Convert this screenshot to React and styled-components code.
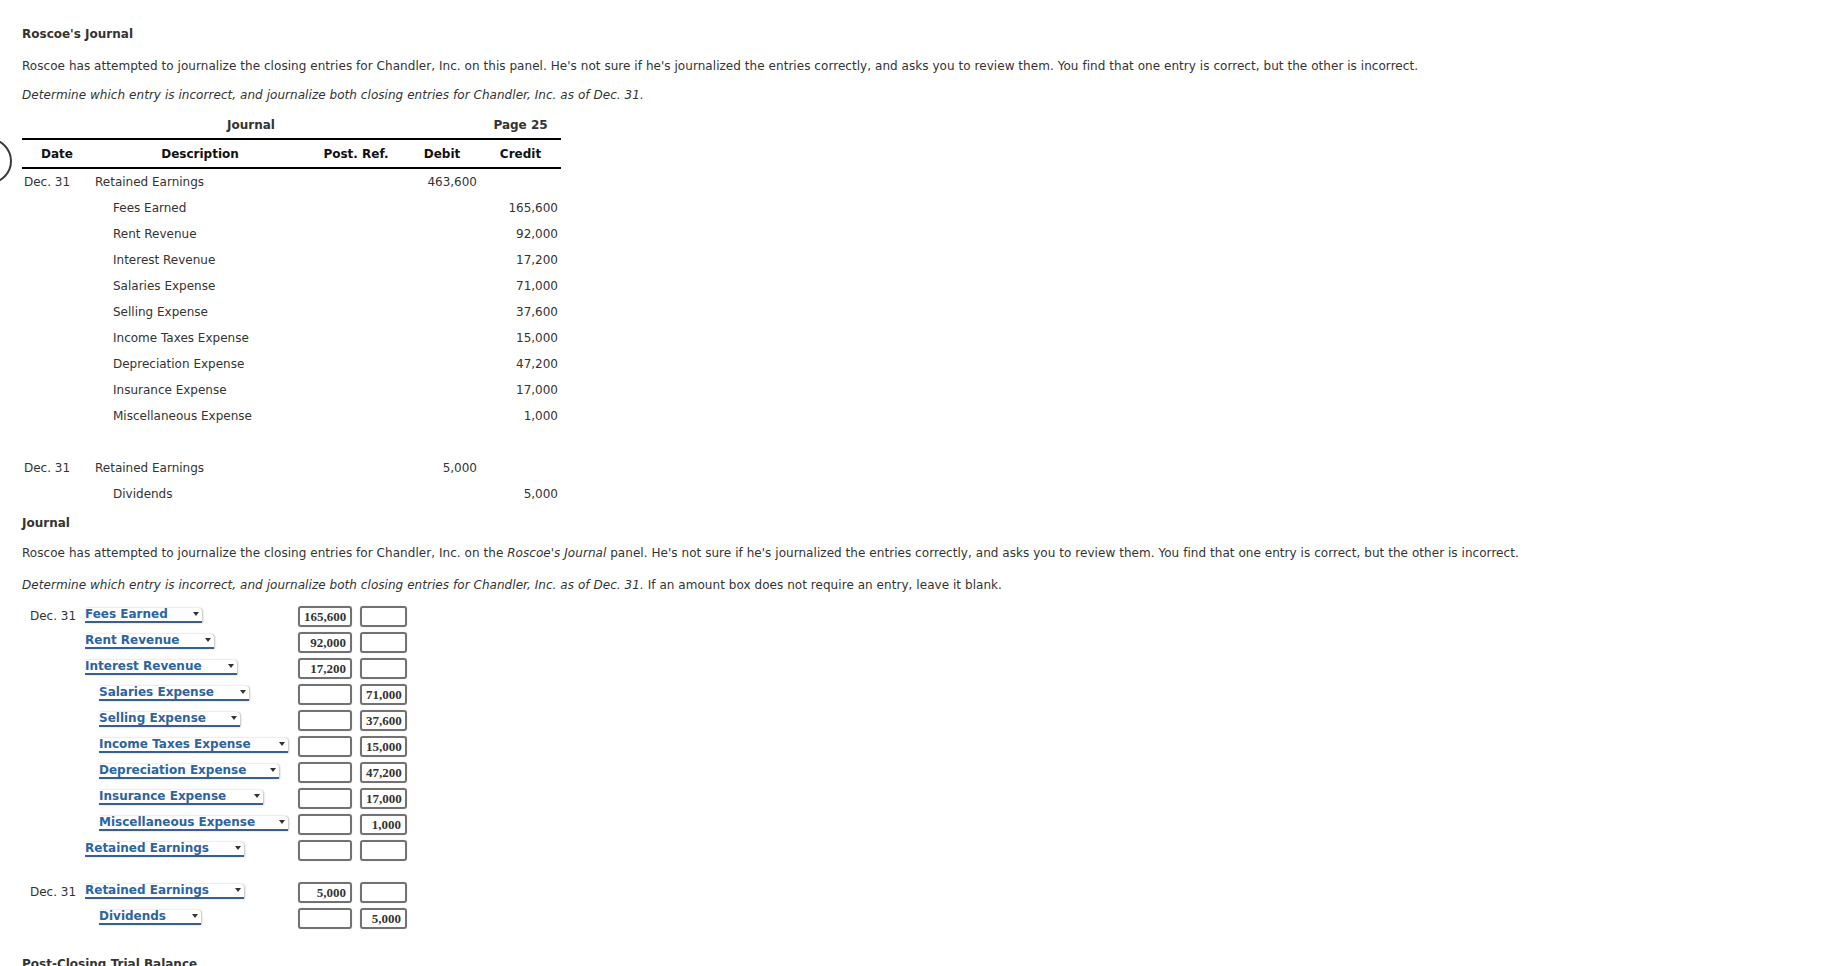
import React from 'react'
import styled, { createGlobalStyle } from 'styled-components'

const GlobalStyle = createGlobalStyle`
  body {
    margin: 0;
    background: #fff;
    font-family: "DejaVu Sans", Verdana, sans-serif;
    font-size: 12px;
    color: #333;
  }
`

const roscoeRows = [
  { date: 'Dec. 31', desc: 'Retained Earnings', debit: '463,600' },
  { desc: 'Fees Earned', indent: true, credit: '165,600' },
  { desc: 'Rent Revenue', indent: true, credit: '92,000' },
  { desc: 'Interest Revenue', indent: true, credit: '17,200' },
  { desc: 'Salaries Expense', indent: true, credit: '71,000' },
  { desc: 'Selling Expense', indent: true, credit: '37,600' },
  { desc: 'Income Taxes Expense', indent: true, credit: '15,000' },
  { desc: 'Depreciation Expense', indent: true, credit: '47,200' },
  { desc: 'Insurance Expense', indent: true, credit: '17,000' },
  { desc: 'Miscellaneous Expense', indent: true, credit: '1,000' },
  { blank: true },
  { date: 'Dec. 31', desc: 'Retained Earnings', debit: '5,000' },
  { desc: 'Dividends', indent: true, credit: '5,000' },
]

const answerRows = [
  { date: 'Dec. 31', account: 'Fees Earned', w: 117, debit: '165,600' },
  { account: 'Rent Revenue', w: 129, debit: '92,000' },
  { account: 'Interest Revenue', w: 152, debit: '17,200' },
  { account: 'Salaries Expense', w: 150, indent: true, credit: '71,000' },
  { account: 'Selling Expense', w: 141, indent: true, credit: '37,600' },
  { account: 'Income Taxes Expense', w: 189, indent: true, credit: '15,000' },
  { account: 'Depreciation Expense', w: 180, indent: true, credit: '47,200' },
  { account: 'Insurance Expense', w: 164, indent: true, credit: '17,000' },
  { account: 'Miscellaneous Expense', w: 189, indent: true, credit: '1,000' },
  { account: 'Retained Earnings', w: 159 },
  { spacer: true },
  { date: 'Dec. 31', account: 'Retained Earnings', w: 159, debit: '5,000' },
  { account: 'Dividends', w: 102, indent: true, credit: '5,000' },
]

function Dropdown({ label, w }) {
  return (
    <Select w={w}>
      <SelectText>{label}</SelectText>
      <Arrow />
    </Select>
  )
}

export default function App() {
  return (
    <Page>
      <GlobalStyle />
      <SideTab />

      <Heading>Roscoe's Journal</Heading>
      <Para>
        Roscoe has attempted to journalize the closing entries for Chandler, Inc. on this panel. He's not sure if he's
        journalized the entries correctly, and asks you to review them. You find that one entry is correct, but the other
        is incorrect.
      </Para>
      <Instruction>
        <i>Determine which entry is incorrect, and journalize both closing entries for Chandler, Inc. as of Dec. 31.</i>
      </Instruction>

      <JournalTable>
        <Caption>Journal</Caption>
        <CaptionRight>Page 25</CaptionRight>
        <HeadRow>
          <HeadCell>Date</HeadCell>
          <HeadCell>Description</HeadCell>
          <HeadCell>Post. Ref.</HeadCell>
          <HeadCell>Debit</HeadCell>
          <HeadCell>Credit</HeadCell>
        </HeadRow>
        {roscoeRows.map((r, i) => (
          <Row key={i}>
            <DateCell>{r.date}</DateCell>
            <DescCell indent={r.indent}>{r.desc}</DescCell>
            <Cell />
            <AmountCell>{r.debit}</AmountCell>
            <AmountCell>{r.credit}</AmountCell>
          </Row>
        ))}
      </JournalTable>

      <SubHeading>Journal</SubHeading>
      <Para2>
        Roscoe has attempted to journalize the closing entries for Chandler, Inc. on the <i>Roscoe's Journal</i> panel.
        He's not sure if he's journalized the entries correctly, and asks you to review them. You find that one entry is
        correct, but the other is incorrect.
      </Para2>
      <Instruction2>
        <i>Determine which entry is incorrect, and journalize both closing entries for Chandler, Inc. as of Dec. 31.</i>{' '}
        If an amount box does not require an entry, leave it blank.
      </Instruction2>

      <Form>
        {answerRows.map((r, i) =>
          r.spacer ? (
            <Spacer key={i} />
          ) : (
            <FormRow key={i}>
              <FormDate>{r.date}</FormDate>
              <AccountCell indent={r.indent}>
                <Dropdown label={r.account} w={r.w} />
              </AccountCell>
              <AmountBox>{r.debit}</AmountBox>
              <AmountBox narrow>{r.credit}</AmountBox>
            </FormRow>
          )
        )}
      </Form>

      <NextHeading>Post-Closing Trial Balance</NextHeading>
    </Page>
  )
}

const Page = styled.div`
  position: relative;
  padding: 25px 0 0 22px;
  height: 966px;
  box-sizing: border-box;
  overflow: hidden;
`

const SideTab = styled.div`
  position: absolute;
  left: -34px;
  top: 138px;
  width: 42px;
  height: 42px;
  border: 2px solid #3a3a3a;
  border-radius: 50%;
`

const Heading = styled.div`
  font-weight: bold;
  line-height: 18px;
`

const Para = styled.p`
  margin: 14px 0 0;
  line-height: 18px;
  white-space: nowrap;
  letter-spacing: 0.05px;
`

const Instruction = styled(Para)`
  margin-top: 11px;
`

const JournalTable = styled.div`
  margin-top: 12px;
  width: 539px;
  display: grid;
  grid-template-columns: 70px 216px 96px 76px 81px;
`

const Caption = styled.div`
  grid-column: 1 / 5;
  text-align: center;
  font-weight: bold;
  line-height: 18px;
  padding-bottom: 4px;
`

const CaptionRight = styled(Caption)`
  grid-column: 5 / 6;
`

const HeadRow = styled.div`
  grid-column: 1 / -1;
  display: grid;
  grid-template-columns: subgrid;
  border-top: 2px solid #000;
  border-bottom: 2px solid #000;
  height: 27px;
  align-items: center;
`

const HeadCell = styled.div`
  text-align: center;
  font-weight: bold;
  color: #111;
`

const Row = styled.div`
  grid-column: 1 / -1;
  display: grid;
  grid-template-columns: subgrid;
  height: 26px;
  align-items: center;
`

const Cell = styled.div`
  white-space: nowrap;
`

const DateCell = styled(Cell)`
  padding-left: 2px;
`

const DescCell = styled(Cell)`
  padding-left: ${p => (p.indent ? '21px' : '3px')};
`

const AmountCell = styled(Cell)`
  text-align: right;
  padding-right: 3px;
`

const SubHeading = styled(Heading)`
  margin-top: 7px;
`

const Para2 = styled(Para)`
  margin-top: 12px;
`

const Instruction2 = styled(Para)`
  margin-top: 14px;
`

const Form = styled.div`
  margin-top: 9px;
  display: flex;
  flex-direction: column;
`

const FormRow = styled.div`
  display: grid;
  grid-template-columns: 55px 205px 54px 47px;
  column-gap: 8px;
  height: 26px;
  align-items: center;
`

const Spacer = styled.div`
  height: 16px;
`

const FormDate = styled.div`
  padding-left: 8px;
  white-space: nowrap;
`

const AccountCell = styled.div`
  padding-left: ${p => (p.indent ? '14px' : '0')};
  display: flex;
`

const Select = styled.div`
  width: ${p => p.w}px;
  box-sizing: border-box;
  height: 15px;
  display: flex;
  align-items: center;
  justify-content: space-between;
  border-bottom: 2px solid #385f8f;
  border-radius: 0 4px 0 0;
  box-shadow: 1px 0 2px rgba(0, 0, 0, 0.25);
  padding-right: 3px;
  margin-top: -2px;
`

const SelectText = styled.span`
  font-weight: bold;
  color: #2d63a0;
  white-space: nowrap;
  line-height: 14px;
`

const Arrow = styled.span`
  width: 0;
  height: 0;
  border-left: 3px solid transparent;
  border-right: 3px solid transparent;
  border-top: 4px solid #333;
`

const AmountBox = styled.div`
  width: ${p => (p.narrow ? '47px' : '54px')};
  height: 21px;
  box-sizing: border-box;
  border: 2px solid #727272;
  border-radius: 3px;
  box-shadow: 0 0 1px rgba(0, 0, 0, 0.3);
  font-family: "Liberation Serif", "Times New Roman", serif;
  font-weight: bold;
  font-size: 13px;
  color: #333;
  text-align: right;
  padding: 0 4px;
  line-height: 17px;
`

const NextHeading = styled(Heading)`
  margin-top: 24px;
`
